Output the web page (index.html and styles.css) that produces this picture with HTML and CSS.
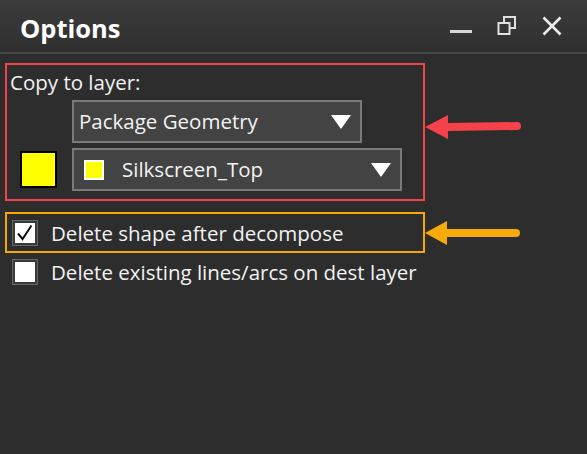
FILE: index.html
```html
<!DOCTYPE html>
<html>
<head>
<meta charset="utf-8">
<link rel="stylesheet" href="styles.css">
</head>
<body>
<div class="window">
  <div class="titlebar">
    <div class="title">Options</div>
    <div class="controls">
      <svg class="ctl" width="22" height="22" viewBox="0 0 22 22"><rect x="0" y="15" width="22" height="3" fill="#d8d8d8"/></svg>
      <svg class="ctl" width="20" height="20" viewBox="0 0 20 20"><rect x="7" y="1" width="11" height="11" fill="none" stroke="#e0e0e0" stroke-width="2"/><rect x="1.5" y="7" width="11" height="11" fill="#353535" stroke="#e0e0e0" stroke-width="2"/></svg>
      <svg class="ctl" width="20" height="20" viewBox="0 0 20 20"><path d="M1.5 1.5 L18.5 18.5 M18.5 1.5 L1.5 18.5" stroke="#ececec" stroke-width="2.6"/></svg>
    </div>
  </div>
  <div class="content">
    <div class="section red-row">
      <div class="box red">
        <div class="label">Copy to layer:</div>
        <div class="dd-row first">
          <div class="dropdown dd1">
            <span class="dd-text">Package Geometry</span>
            <span class="tri"></span>
          </div>
        </div>
        <div class="dd-row second">
          <div class="swatch"></div>
          <div class="dropdown dd2">
            <span class="mini"></span>
            <span class="dd-text">Silkscreen_Top</span>
            <span class="tri"></span>
          </div>
        </div>
      </div>
      <svg class="arrow arrow-red" width="96" height="24" viewBox="0 0 96 24"><polygon points="0,12 23,0 23,24" fill="#f5424a"/><line x1="22" y1="12" x2="92" y2="11" stroke="#f5424a" stroke-width="8" stroke-linecap="round"/></svg>
    </div>
    <div class="section orange-row">
      <div class="box orange">
        <div class="check-row">
          <span class="checkbox checked"><svg width="20" height="20" viewBox="0 0 20 20"><path d="M3 10.5 L7.5 16 L16.5 2.5" fill="none" stroke="#111" stroke-width="2"/></svg></span>
          <span class="check-text">Delete shape after decompose</span>
        </div>
      </div>
      <svg class="arrow" width="96" height="24" viewBox="0 0 96 24"><polygon points="0,12 22,0 22,24" fill="#f6ab0a"/><line x1="21" y1="12" x2="91" y2="12" stroke="#f6ab0a" stroke-width="8" stroke-linecap="round"/></svg>
    </div>
    <div class="check-row plain">
      <span class="checkbox"></span>
      <span class="check-text">Delete existing lines/arcs on dest layer</span>
    </div>
  </div>
</div>
</body>
</html>
```
FILE: styles.css
```css
html, body {
  margin: 0;
  padding: 0;
  background: #2d2d2d;
}
body {
  width: 587px;
  height: 454px;
  overflow: hidden;
  font-family: "Open Sans", "Noto Sans", sans-serif;
  color: #f2f2f2;
}
.titlebar {
  height: 52px;
  display: flex;
  align-items: center;
  padding-left: 20px;
  padding-right: 25px;
  background: linear-gradient(#3c3c3c, #2f2f2f);
  border-bottom: 2px solid #474747;
}
.title {
  font-size: 25.5px;
  font-weight: 700;
  color: #ffffff;
  flex: 1;
  margin-top: 4px;
}
.controls {
  display: flex;
  align-items: center;
  gap: 25px;
}
.controls .ctl { display: block; }
.content {
  padding: 9px 0 0 5px;
}
.section {
  display: flex;
}
.red-row { align-items: flex-start; }
.arrow { display: block; flex: none; }
.arrow-red { margin-top: 52px; }
.orange-row { align-items: center; margin-top: 11px; }
.box {
  width: 416px;
  border: 2px solid;
}
.box.red {
  border-color: #f0434a;
  height: 134px;
}
.box.orange {
  border-color: #f5a900;
  height: 37px;
  display: flex;
  align-items: center;
}
.label {
  font-size: 20.5px;
  line-height: 28px;
  padding: 3px 0 0 3px;
  box-sizing: border-box;
  height: 35px;
}
.dd-row {
  display: flex;
  align-items: center;
}
.dd-row.first { padding-left: 65px; }
.dd-row.second { margin-top: 5px; padding-left: 13px; }
.dropdown {
  height: 43px;
  box-sizing: border-box;
  border: 2px solid #7a7a7a;
  background: #434343;
  display: flex;
  align-items: center;
  font-size: 20.5px;
  position: relative;
}
.dd1 { width: 290px; padding-left: 5px; }
.dd2 { width: 330px; padding-left: 10px; margin-left: 15px; }
.dd-text { flex: 1; white-space: nowrap; margin-top: -1px; }
.tri {
  width: 0;
  height: 0;
  border-left: 10.5px solid transparent;
  border-right: 10.5px solid transparent;
  border-top: 14px solid #ffffff;
  margin-right: 9px;
}
.mini {
  width: 16px;
  height: 16px;
  background: #ffff00;
  border: 2px solid #ffffff;
  margin-right: 18px;
  flex: none;
}
.swatch {
  width: 33px;
  height: 33px;
  background: #ffff00;
  border: 2px solid #000000;
  flex: none;
}
.check-row {
  display: flex;
  align-items: center;
  font-size: 20.5px;
}
.box.orange .check-row { padding-left: 6px; }
.check-row.plain { padding-left: 8px; margin-top: 5px; }
.checkbox {
  width: 24px;
  height: 24px;
  box-sizing: border-box;
  background: #ffffff;
  border: 2px solid #3a3a3a;
  outline: 1px solid #666;
  display: flex;
  align-items: center;
  justify-content: center;
  flex: none;
  margin-right: 14px;
}
.checkbox svg { display: block; }
.check-text { white-space: nowrap; }
```
